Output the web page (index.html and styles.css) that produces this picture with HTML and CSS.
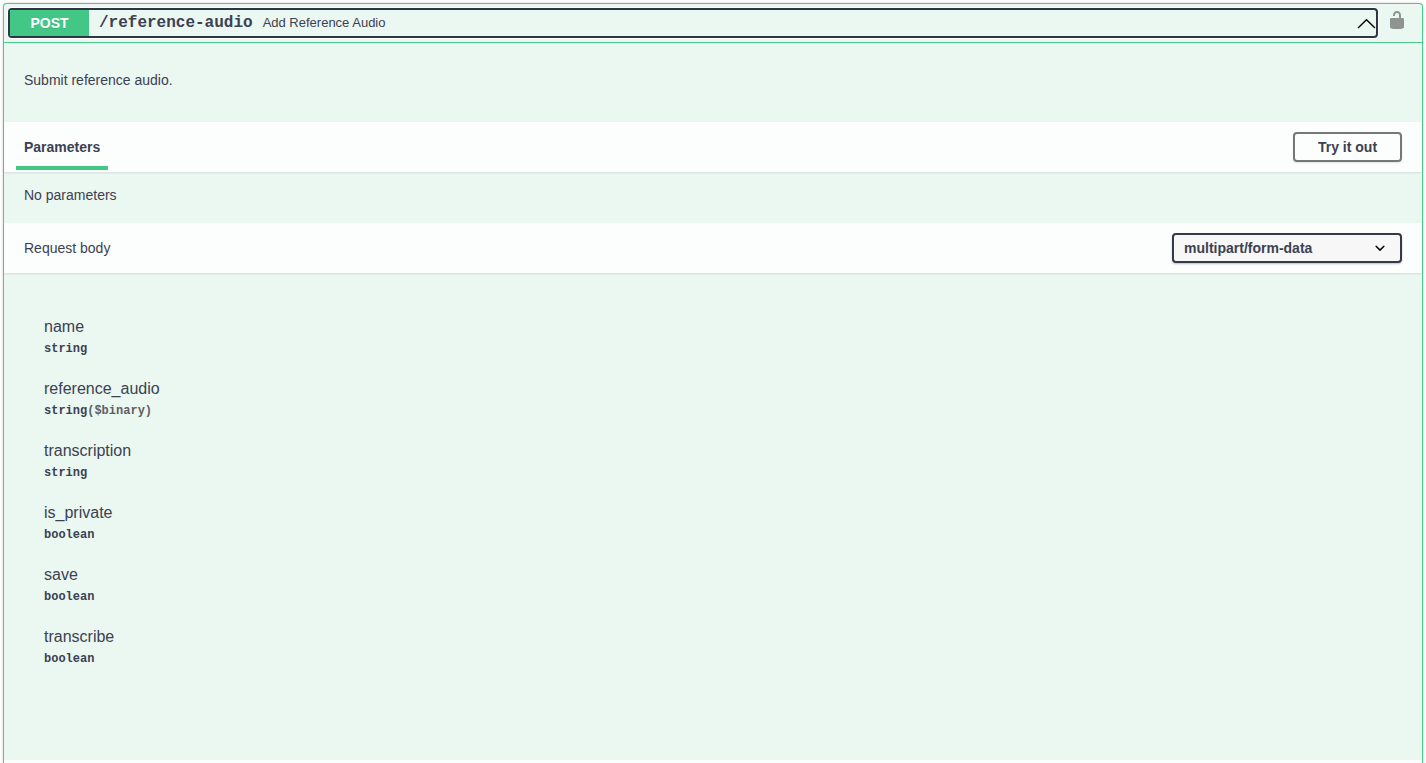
FILE: index.html
```html
<!DOCTYPE html>
<html lang="en">
<head>
<meta charset="utf-8">
<title>POST /reference-audio</title>
<link rel="stylesheet" href="styles.css">
</head>
<body>
<main class="page">
  <section class="opblock">
    <div class="summary">
      <button class="summary-control" type="button" aria-expanded="true">
        <span class="method">POST</span>
        <span class="path">/reference-audio</span>
        <span class="description">Add Reference Audio</span>
        <svg class="arrow" viewBox="0 0 20 20" aria-hidden="true"><path d="M2 15 10.500 6.700l8.500 8.300" fill="none" stroke="#000" stroke-width="1.400"/></svg>
      </button>
      <button class="lock" type="button" aria-label="Authorization">
        <svg viewBox="0 0 20 20" aria-hidden="true"><path d="M15.800 8H14V5.600C14 2.703 12.665 1 10 1 7.334 1 6 2.703 6 5.600V6h2v-.801C8 3.754 8.797 3 10 3c1.203 0 2 .754 2 2.199V8H4c-.553 0-1 .646-1 1.199V17c0 .549.428 1.139.951 1.307l1.197.387C5.672 18.861 6.550 19 7.100 19h5.800c.549 0 1.428-.139 1.951-.307l1.196-.387c.524-.167.953-.757.953-1.306V9.199C17 8.646 16.352 8 15.800 8z"/></svg>
      </button>
    </div>
    <p class="intro">Submit reference audio.</p>
    <header class="section-header">
      <h2 class="tab">Parameters</h2>
      <button class="try" type="button">Try it out</button>
    </header>
    <p class="empty">No parameters</p>
    <header class="section-header">
      <label class="body-label" for="content-type">Request body</label>
      <div class="select-wrap">
        <select class="content-type" id="content-type">
          <option>multipart/form-data</option>
        </select>
        <svg class="chevron" viewBox="0 0 20 20" aria-hidden="true"><path d="M13.418 7.859a.695.695 0 0 1 .978 0 .680.680 0 0 1 0 .969l-3.908 3.830a.697.697 0 0 1-.979 0l-3.908-3.830a.680.680 0 0 1 0-.969.695.695 0 0 1 .978 0L10 11l3.418-3.141z"/></svg>
      </div>
    </header>
    <dl class="fields">
      <div class="field"><dt class="name">name</dt><dd class="type">string</dd></div>
      <div class="field"><dt class="name">reference_audio</dt><dd class="type">string<span class="format">($binary)</span></dd></div>
      <div class="field"><dt class="name">transcription</dt><dd class="type">string</dd></div>
      <div class="field"><dt class="name">is_private</dt><dd class="type">boolean</dd></div>
      <div class="field"><dt class="name">save</dt><dd class="type">boolean</dd></div>
      <div class="field"><dt class="name">transcribe</dt><dd class="type">boolean</dd></div>
    </dl>
    <div class="next-section"></div>
  </section>
</main>
</body>
</html>
```
FILE: styles.css
```css
* {
  box-sizing: border-box;
}

body {
  margin: 0;
  background: #fff;
  color: #3b4151;
  font: 14px/20px "Liberation Sans", Arial, sans-serif;
}

button,
select {
  font: inherit;
  color: inherit;
}

.page {
  display: flex;
  min-height: 100vh;
  padding: 3px 3px 0;
}

.opblock {
  display: flex;
  flex: 1;
  flex-direction: column;
  border: 1px solid #49cc90;
  border-bottom: 0;
  border-radius: 4px 4px 0 0;
  background: #ebf7f1;
  box-shadow: 0 0 3px rgba(0, 0, 0, .19);
}

.summary {
  display: flex;
  align-items: center;
  padding: 4px;
  border-bottom: 1px solid #49cc90;
}

.summary-control {
  display: flex;
  flex: 1;
  align-items: center;
  height: 30px;
  padding: 0;
  border: 2px solid #2e3646;
  border-radius: 4px;
  background: none;
  box-shadow: 0 0 0 1px #fff;
  text-align: left;
}

.method {
  width: 79px;
  background: #43c787;
  color: #fff;
  font-weight: 700;
  line-height: 26px;
  text-align: center;
  text-shadow: 0 1px 0 rgba(0, 0, 0, .1);
}

.path {
  padding: 0 10px;
  font: 700 16px/20px "Liberation Mono", "Courier New", monospace;
}

.description {
  flex: 1;
  font-size: 13px;
}

.arrow {
  width: 20px;
  height: 20px;
}

.lock {
  display: flex;
  margin: 0 11px 6px 9px;
  padding: 0;
  border: 0;
  background: none;
}

.lock svg {
  width: 20px;
  height: 20px;
  fill: #8e9491;
}

.intro {
  margin: 0;
  padding: 27px 20px 32px;
}

.section-header {
  display: flex;
  align-items: center;
  justify-content: space-between;
  height: 50px;
  padding: 0 20px;
  background: #fcfefd;
  box-shadow: 0 1px 2px rgba(0, 0, 0, .1);
}

.tab {
  align-self: flex-end;
  margin: 0 -8px 2px;
  padding: 0 8px 9px;
  border-bottom: 4px solid #43c787;
  font-size: 14px;
  line-height: 20px;
}

.try {
  width: 109px;
  height: 30px;
  padding: 0;
  border: 2px solid #777;
  border-radius: 4px;
  background: none;
  box-shadow: 0 1px 2px rgba(0, 0, 0, .1);
  font-weight: 700;
}

.empty {
  margin: 0;
  padding: 13px 20px 18px;
}

.select-wrap {
  position: relative;
  width: 230px;
}

.content-type {
  display: block;
  width: 100%;
  height: 30px;
  padding: 0 40px 0 10px;
  border: 2px solid #343a48;
  border-radius: 4px;
  appearance: none;
  background: #f7f7f7;
  box-shadow: 0 1px 2px rgba(0, 0, 0, .25);
  font-weight: 700;
}

.chevron {
  position: absolute;
  top: 5px;
  right: 12px;
  width: 20px;
  height: 20px;
  pointer-events: none;
}

.fields {
  display: flex;
  flex: 1;
  flex-direction: column;
  gap: 20px;
  margin: 0;
  padding: 44px 40px;
}

.name {
  font-size: 16px;
  line-height: 20px;
}

.type {
  margin: 0;
  padding-top: 2px;
  font: 700 12px/20px "Liberation Mono", "Courier New", monospace;
}

.format {
  color: #606060;
}

.next-section {
  height: 3px;
  background: #fcfefd;
}
```
